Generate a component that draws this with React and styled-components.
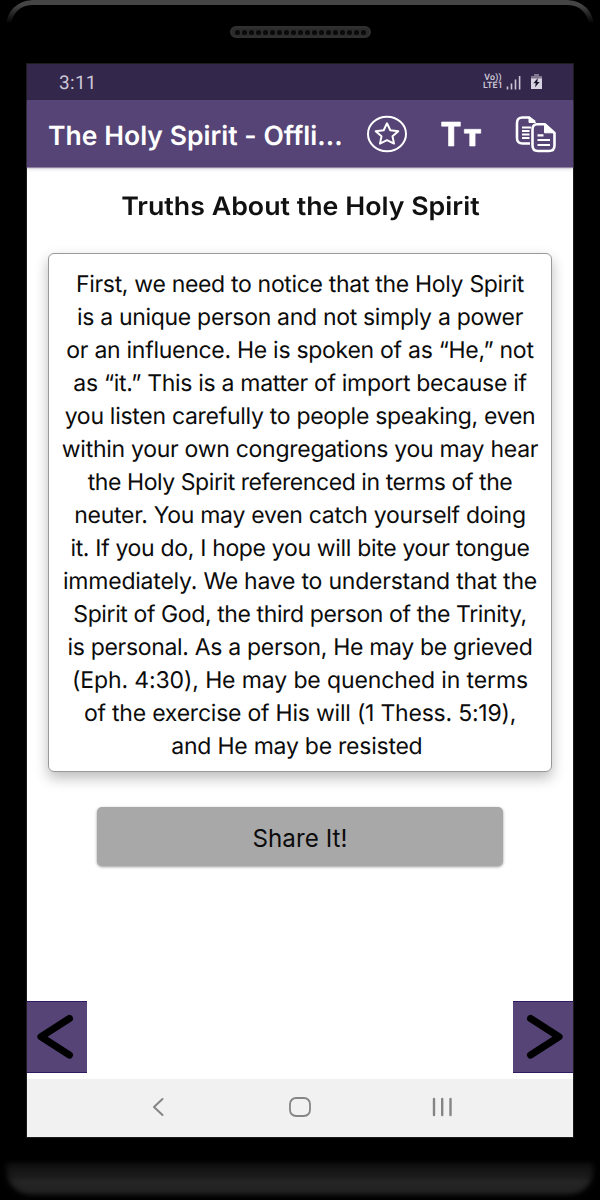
/**
 * Dependencies
 */

import React from 'react';
import styled, { createGlobalStyle } from 'styled-components';

/**
 * Define styles
 */

const GlobalStyle = createGlobalStyle`
  body {
    margin: 0;
    background-color: #000;
    font-family: Inter, "Liberation Sans", sans-serif;
    text-rendering: geometricPrecision;
  }
`

const Phone = styled.div`
  position: relative;
  display: flex;
  flex-direction: column;
  align-items: center;
  box-sizing: border-box;
  width: 600px;
  height: 1200px;
  overflow: hidden;
  background-color: #000;
`

const TopEdge = styled.div`
  position: absolute;
  top: 0;
  left: 6px;
  right: 6px;
  height: 26px;
  box-sizing: border-box;
  border: 5px solid #454545;
  border-bottom: 0;
  border-radius: 26px 26px 0 0;
  mask-image: linear-gradient(#000 20%, transparent 90%);
`

const Speaker = styled.div`
  display: flex;
  justify-content: center;
  align-items: center;
  flex: none;
  gap: 2px;
  box-sizing: border-box;
  width: 141px;
  height: 12px;
  margin: 26px 0;
  border: 2px solid #303030;
  border-radius: 6px;
  background-color: #2b2b2b;
`

const Hole = styled.i`
  width: 5px;
  height: 5px;
  border-radius: 50%;
  background-color: #0a0a0a;
`

const Screen = styled.main`
  display: flex;
  flex-direction: column;
  flex: none;
  width: 546px;
  height: 1073px;
  background-color: #fff;
  box-shadow: 0 0 0 1px #1c1c1c;
`

const StatusBar = styled.div`
  display: flex;
  align-items: center;
  height: 36px;
  padding: 0 31px 0 32px;
  background-color: #33274b;
  color: #cbc5d6;
`

const Clock = styled.span`
  flex: 1;
  padding-top: 2px;
  font: 19px/36px Roboto, sans-serif;
  letter-spacing: 0.3px;
`

const Network = styled.span`
  display: flex;
  flex-direction: column;
  align-items: center;
  margin-right: 3px;
  font: 600 8.8px/8.5px Roboto, sans-serif;
  letter-spacing: 0.2px;
`

const Toolbar = styled.header`
  display: flex;
  align-items: center;
  gap: 34px;
  height: 67px;
  box-sizing: border-box;
  padding: 0 18px 0 22px;
  background-color: #554475;
  box-shadow: 0 1px 1px #8d82a3, 0 2px 4px rgba(0, 0, 0, 0.15);
  color: #fff;
`

const AppTitle = styled.h1`
  flex: 1;
  min-width: 0;
  margin: 5px 0 0 -1px;
  font-size: 26.5px;
  font-weight: 600;
  letter-spacing: 0.03px;
  line-height: 36px;
  white-space: nowrap;
`

const Icon = styled.svg`
  display: block;
  flex: none;
  overflow: visible;
  fill: none;
  stroke: currentColor;
  stroke-linejoin: round;
`

const Content = styled.section`
  display: flex;
  flex-direction: column;
  align-items: center;
  flex: 1;
`

const Heading = styled.h2`
  margin: 22px 0 0;
  color: #111;
  font-size: 25.3px;
  font-weight: 600;
  line-height: 36px;
  white-space: nowrap;
  transform: scaleX(1.058);
`

const Card = styled.article`
  box-sizing: border-box;
  width: 504px;
  height: 519px;
  margin-top: 28px;
  padding-top: 14px;
  border: 1px solid #999;
  border-radius: 6px;
  background-color: #fff;
  box-shadow: 0 6px 14px rgba(0, 0, 0, 0.27);
`

const Line = styled.div`
  color: #0c0c0c;
  font-size: 23px;
  letter-spacing: ${props => props.$tracking}px;
  line-height: 33px;
  text-align: center;
  white-space: pre;
`

const ShareButton = styled.button`
  width: 406px;
  height: 59px;
  margin-top: 35px;
  padding: 4px 0 0;
  border: 0;
  border-radius: 5px;
  background-color: #a8a8a8;
  box-shadow: 0 1px 3px rgba(0, 0, 0, 0.4);
  color: #0c0c0c;
  font: 24.2px Inter, sans-serif;
  letter-spacing: 0.05px;
`

const Pager = styled.nav`
  display: flex;
  justify-content: space-between;
  margin-bottom: 6px;
`

const PageButton = styled.button`
  display: flex;
  justify-content: center;
  align-items: center;
  width: 60px;
  height: 72px;
  padding: 0;
  border: solid #2e1a60;
  border-width: 1px 0;
  background-color: #554475;
  color: #000;
`

const SystemBar = styled.footer`
  display: flex;
  justify-content: space-between;
  align-items: center;
  height: 58px;
  box-sizing: border-box;
  padding: 0 120px 2px 125px;
  background-color: #f1f1f1;
  color: #858585;
`

const Chin = styled.div`
  flex: none;
  width: 598px;
  height: 40px;
  margin-top: 23px;
  border-radius: 0 0 30px 30px;
  background: linear-gradient(#0d0d0d, #1a1a1a 40%, #252525 55%, #222 80%, #111);
  box-shadow: inset 0 -4px 6px #000, inset 5px 0 6px #000, inset -5px 0 6px #000;
`

/**
 * Passage text, one entry per line with its letter spacing
 */

const lines = [
  ['First, we need to notice that the Holy Spirit', -0.32],
  ['is a unique person and not simply a power', -0.31],
  ['or an influence. He is spoken of as “He,” not', -0.28],
  ['as “it.” This is a matter of import because if', -0.31],
  ['you listen carefully to people speaking, even', -0.29],
  ['within your own congregations you may hear', -0.28],
  ['the Holy Spirit referenced in terms of the', -0.43],
  ['neuter. You may even catch yourself doing', -0.28],
  ['it. If you do, I hope you will bite your tongue', -0.33],
  ['immediately. We have to understand that the', -0.22],
  ['Spirit of God, the third person of the Trinity,', -0.4],
  ['is personal. As a person, He may be grieved', -0.32],
  ['(Eph. 4:30), He may be quenched in terms', -0.12],
  ['of the exercise of His will (1 Thess. 5:19),', -0.22],
  ['and He may be resisted ', -0.24],
];

/**
 * Define icons
 */

function SignalIcon() {
  return (
    <Icon width="15" height="15" viewBox="0 0 15 15" strokeWidth="1.6">
      <path d="M1.5 11.5v3M5.5 8.5v6M9.5 4.5v10M13.6 1v13.5" />
    </Icon>
  );
}

function BatteryIcon() {
  return (
    <Icon width="11" height="16" viewBox="0 0 11 16" strokeWidth="0">
      <path d="M3 0h5v2h3v3H0V2h3z" fill="#81788f" />
      <path d="M0 4.5h11V15H0z" fill="#d8d3e0" />
      <path d="M6.8 4 2.4 9.2h2.4L4 13.3l4.7-5.2H6.3z" fill="#1d1530" />
    </Icon>
  );
}

function StarIcon() {
  return (
    <Icon width="40" height="36" viewBox="0 0 40 36" strokeWidth="2">
      <ellipse cx="20" cy="18" rx="19" ry="17.2" />
      <path d="M20 7.3 23.3 14.2 31.3 15.2 25.5 20.3 27 27.6 20 24.2 13 27.6 14.5 20.3 8.7 15.2 16.7 14.2z" />
    </Icon>
  );
}

function TextSizeIcon() {
  return (
    <Icon width="40" height="36" viewBox="0 0 40 36" strokeWidth="0.6">
      <path fill="currentColor" d="M.6 6h18.8v4.2h-6.5V30H7.5V10.2H.6z" />
      <path fill="currentColor" d="M23.3 13.3h16.5v3.9h-5.7V30h-5.4V17.2h-5.4z" />
    </Icon>
  );
}

function CopyIcon() {
  return (
    <Icon width="40" height="36" viewBox="0 0 40 36" strokeWidth="2.6">
      <path d="M15 27.5H7.5Q2 27.5 2 22V7Q2 1.5 7.5 1.5h6.5L20 6" />
      <path d="M14 .8v5.7h6.5z" fill="currentColor" strokeWidth="1" />
      <path d="M7 11.5h9M7 15h7.5M7 18.5h7.5M7 22h7.5" strokeWidth="1.8" />
      <path d="M22 8.3h7.8L39.5 17v12.5Q39.5 35 34 35H23Q17.5 35 17.5 29.5v-16Q17.5 8.3 22 8.3z" />
      <path d="M29.5 8v8.8h10z" fill="currentColor" strokeWidth="1" />
      <path d="M22.5 19.3h6M22.5 24h12.5M22.5 29h12.5" strokeWidth="2.2" />
    </Icon>
  );
}

function ArrowIcon({ d }) {
  return (
    <Icon width="60" height="70" viewBox="0 0 60 70" strokeWidth="7.2" strokeLinecap="round">
      <path d={d} />
    </Icon>
  );
}

/**
 * Define component
 */

function App() {
  return (
    <Phone>
      <GlobalStyle />
      <TopEdge />
      <Speaker>
        {Array.from({ length: 19 }, (_, i) => <Hole key={i} />)}
      </Speaker>
      <Screen>
        <StatusBar>
          <Clock>3:11</Clock>
          <Network>
            <span>Vo))</span>
            <span>LTE1</span>
          </Network>
          <SignalIcon />
          <Icon width="10" height="1" />
          <BatteryIcon />
        </StatusBar>
        <Toolbar>
          <AppTitle>The Holy Spirit - Offli...</AppTitle>
          <StarIcon />
          <TextSizeIcon />
          <CopyIcon />
        </Toolbar>
        <Content>
          <Heading>Truths About the Holy Spirit</Heading>
          <Card>
            {lines.map(([text, tracking]) => (
              <Line key={text} $tracking={tracking}>{text}</Line>
            ))}
          </Card>
          <ShareButton>Share It!</ShareButton>
        </Content>
        <Pager>
          <PageButton aria-label="Previous">
            <ArrowIcon d="M42.4 16.5 14 34.7 42.4 53" />
          </PageButton>
          <PageButton aria-label="Next">
            <ArrowIcon d="M17.6 16.5 46 34.7 17.6 53" />
          </PageButton>
        </Pager>
        <SystemBar>
          <Icon width="16" height="20" viewBox="0 0 16 20" strokeWidth="2" strokeLinecap="round">
            <path d="M10.5 2 2 10l8.5 8" />
          </Icon>
          <Icon width="22" height="20" viewBox="0 0 22 20" strokeWidth="1.8">
            <rect x="1" y="1" width="20" height="18" rx="6" />
          </Icon>
          <Icon width="21" height="20" viewBox="0 0 21 20" strokeWidth="2.4" strokeLinecap="round">
            <path d="M2 2v16M10.2 2v16M18.5 2v16" />
          </Icon>
        </SystemBar>
      </Screen>
      <Chin />
    </Phone>
  );
}

/**
 * Export component
 */

export default App;
